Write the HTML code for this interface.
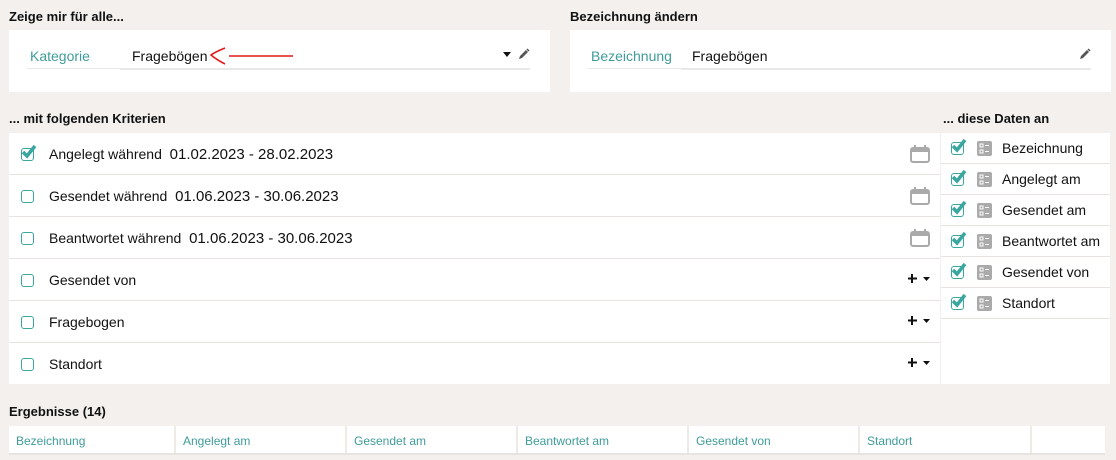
<!DOCTYPE html>
<html><head><meta charset="utf-8"><style>
*{box-sizing:border-box;margin:0;padding:0}
body{width:1116px;height:460px;overflow:hidden;background:#f3f0ed;font-family:"Liberation Sans",sans-serif;color:#111;position:relative}
.h{position:absolute;font-weight:bold;font-size:13px}
.p{position:absolute;background:#fff}
.lab{position:absolute;color:#3f9c9a;font-size:14px}
.val{position:absolute;font-size:14px}
.ul{position:absolute;height:2px;background:#e8e8e8}
.row{position:absolute;left:0;width:931px;height:42px;border-bottom:1px solid #e6e3e0}
.cb{position:absolute;width:13px;height:13px;border:1.5px solid #3aa6a0;border-radius:3px}
.txt{position:absolute;font-size:14px}
.cal{position:absolute;right:10px;top:12px}
.pl{position:absolute;right:10px;top:14px}
.drow{position:absolute;left:0;width:169px;height:31px;border-bottom:1px solid #e6e3e0}
.th{position:absolute;top:0;height:27px;border-right:2px solid #eeeae6;color:#3f9c9a;font-size:12px;padding:8px 0 0 7px}
</style></head><body>
<div class="h" style="left:9px;top:9px">Zeige mir für alle...</div>
<div class="h" style="left:570px;top:9px">Bezeichnung ändern</div>
<div class="p" style="left:9px;top:30px;width:541px;height:62px">
 <div class="lab" style="left:21px;top:18px">Kategorie</div>
 <div class="val" style="left:123px;top:18px">Fragebögen</div>
 <div class="ul" style="left:18px;top:38px;width:102px;height:1px"></div>
 <div class="ul" style="left:111px;top:38px;width:410px"></div>
 <svg style="position:absolute;left:196px;top:14px" width="94" height="22"><path d="M24 12 L88 12 M20 4 Q10 8 6 11 Q12 16 20 20" stroke="#e41a1a" stroke-width="1.6" fill="none"/></svg>
 <svg style="position:absolute;left:494px;top:22px" width="8" height="5"><path d="M0 0h8l-4 5z" fill="#111"/></svg>
 <svg style="position:absolute;left:509px;top:18px" width="12" height="12"><path d="M1 11l1-3 6-6 2 2-6 6z" fill="#555"/><path d="M9 1l2 2" stroke="#555" stroke-width="1.5"/></svg>
</div>
<div class="p" style="left:570px;top:30px;width:541px;height:62px">
 <div class="lab" style="left:21px;top:18px">Bezeichnung</div>
 <div class="val" style="left:122px;top:18px">Fragebögen</div>
 <div class="ul" style="left:18px;top:38px;width:102px;height:1px"></div>
 <div class="ul" style="left:111px;top:38px;width:410px"></div>
 <svg style="position:absolute;left:509px;top:18px" width="12" height="12"><path d="M1 11l1-3 6-6 2 2-6 6z" fill="#555"/><path d="M9 1l2 2" stroke="#555" stroke-width="1.5"/></svg>
</div>
<div class="h" style="left:9px;top:111px">... mit folgenden Kriterien</div>
<div class="h" style="left:943px;top:111px">... diese Daten an</div>
<div class="p" style="left:9px;top:133px;width:931px;height:251px">
 <div class="row" style="top:0"><div class="cb" style="left:12px;top:15px;background:#fff"><svg width="16" height="16" style="position:absolute;left:-1px;top:-5px"><path d="M2 8 L6 12 L14 2" stroke="#3aa6a0" stroke-width="3.5" fill="none"/></svg></div><div class="txt" style="left:40px;top:13px">Angelegt während &nbsp;<span style="font-size:15px">01.02.2023 - 28.02.2023</span></div><svg class="cal" width="20" height="18"><rect x="1" y="3" width="18" height="14" rx="2" fill="none" stroke="#aaa" stroke-width="2"/><rect x="1" y="3" width="18" height="4" fill="#aaa"/><path d="M5 0v4M15 0v4" stroke="#aaa" stroke-width="2"/></svg></div>
 <div class="row" style="top:42px"><div class="cb" style="left:12px;top:15px"></div><div class="txt" style="left:40px;top:13px">Gesendet während &nbsp;<span style="font-size:15px">01.06.2023 - 30.06.2023</span></div><svg class="cal" width="20" height="18"><rect x="1" y="3" width="18" height="14" rx="2" fill="none" stroke="#aaa" stroke-width="2"/><rect x="1" y="3" width="18" height="4" fill="#aaa"/><path d="M5 0v4M15 0v4" stroke="#aaa" stroke-width="2"/></svg></div>
 <div class="row" style="top:84px"><div class="cb" style="left:12px;top:15px"></div><div class="txt" style="left:40px;top:13px">Beantwortet während &nbsp;<span style="font-size:15px">01.06.2023 - 30.06.2023</span></div><svg class="cal" width="20" height="18"><rect x="1" y="3" width="18" height="14" rx="2" fill="none" stroke="#aaa" stroke-width="2"/><rect x="1" y="3" width="18" height="4" fill="#aaa"/><path d="M5 0v4M15 0v4" stroke="#aaa" stroke-width="2"/></svg></div>
 <div class="row" style="top:126px"><div class="cb" style="left:12px;top:15px"></div><div class="txt" style="left:40px;top:13px">Gesendet von</div><svg class="pl" width="22" height="12"><path d="M4 1v9M0 5.5h9" stroke="#111" stroke-width="2"/><path d="M15 4h7l-3.5 4z" fill="#111"/></svg></div>
 <div class="row" style="top:168px"><div class="cb" style="left:12px;top:15px"></div><div class="txt" style="left:40px;top:13px">Fragebogen</div><svg class="pl" width="22" height="12"><path d="M4 1v9M0 5.5h9" stroke="#111" stroke-width="2"/><path d="M15 4h7l-3.5 4z" fill="#111"/></svg></div>
 <div class="row" style="top:210px;border:0"><div class="cb" style="left:12px;top:15px"></div><div class="txt" style="left:40px;top:13px">Standort</div><svg class="pl" width="22" height="12"><path d="M4 1v9M0 5.5h9" stroke="#111" stroke-width="2"/><path d="M15 4h7l-3.5 4z" fill="#111"/></svg></div>
</div>
<div class="p" style="left:941px;top:133px;width:169px;height:251px">
 <div class="drow" style="top:0"></div><div class="drow" style="top:31px"></div><div class="drow" style="top:62px"></div><div class="drow" style="top:93px"></div><div class="drow" style="top:124px"></div><div class="drow" style="top:155px"></div>
</div>
<div id="dl"></div>
<div class="h" style="left:9px;top:404px">Ergebnisse (14)</div>
<div class="p" style="left:9px;top:426px;width:1096px;height:29px;border-bottom:2px solid #e6e3e0">
 <div class="th" style="left:0;width:167px">Bezeichnung</div>
 <div class="th" style="left:167px;width:171px">Angelegt am</div>
 <div class="th" style="left:338px;width:171px">Gesendet am</div>
 <div class="th" style="left:509px;width:171px">Beantwortet am</div>
 <div class="th" style="left:680px;width:171px">Gesendet von</div>
 <div class="th" style="left:851px;width:172px">Standort</div>
</div>
<script>
var n=["Bezeichnung","Angelegt am","Gesendet am","Beantwortet am","Gesendet von","Standort"],h="";
n.forEach(function(t,i){var y=133+i*31;
h+='<div style="position:absolute;left:951px;top:'+(y+9)+'px;width:13px;height:13px;border:1.5px solid #3aa6a0;border-radius:3px"><svg width="16" height="16" style="position:absolute;left:-1px;top:-5px"><path d="M2 8 L6 12 L14 2" stroke="#3aa6a0" stroke-width="3.5" fill="none"/></svg></div>';
h+='<svg style="position:absolute;left:977px;top:'+(y+8)+'px" width="15" height="15"><rect width="15" height="15" rx="2" fill="#aaa"/><path d="M3 3h3v3h-3zM3 9h3v3h-3zM8 4.5h4M8 10.5h4" stroke="#fff" stroke-width="1" fill="none"/></svg>';
h+='<div style="position:absolute;left:1002px;top:'+(y+7)+'px;font-size:14px">'+t+'</div>';});
document.getElementById("dl").innerHTML=h;
</script>
</body></html>
